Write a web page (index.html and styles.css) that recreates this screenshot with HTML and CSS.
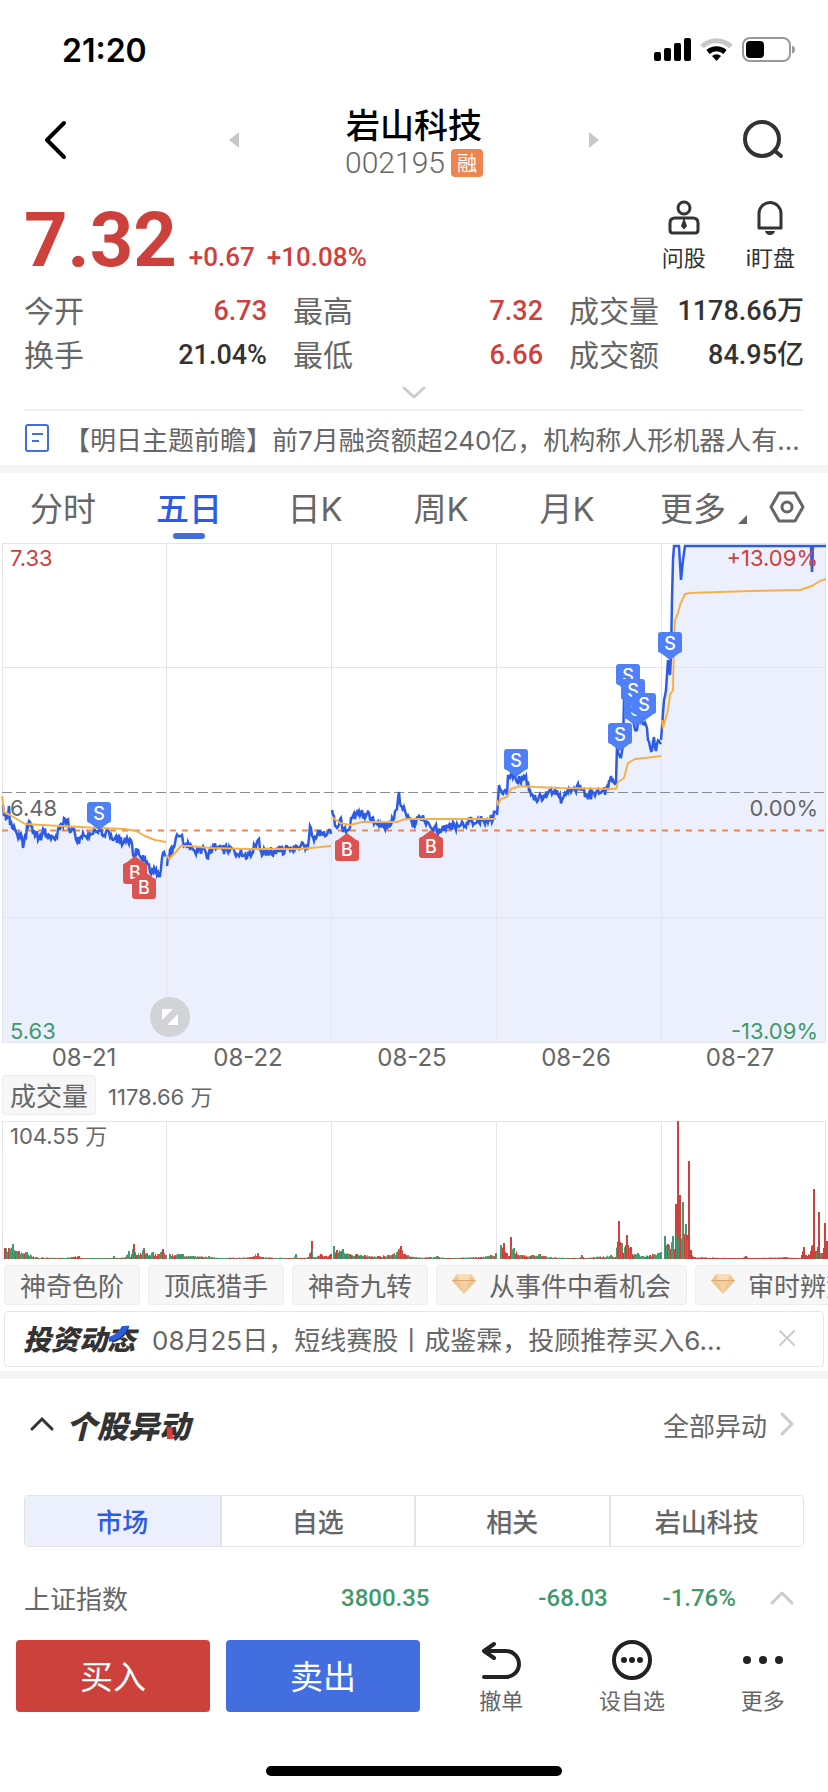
FILE: index.html
```html
<!DOCTYPE html>
<html lang="zh-CN">
<head>
<meta charset="utf-8">
<meta name="viewport" content="width=device-width">
<title>岩山科技 002195</title>
<link rel="stylesheet" href="styles.css">
</head>
<body>
<div class="status">
  <span class="clock">21:20</span>
  <svg class="status-icons" width="144" height="28" viewBox="0 0 144 28" aria-hidden="true">
    <rect x="3" y="16" width="7" height="9" rx="2"/><rect x="13" y="12" width="7" height="13" rx="2"/><rect x="23" y="7" width="7" height="18" rx="2"/><rect x="33" y="2" width="7" height="23" rx="2"/>
    <path d="M51 10.500a21 21 0 0 1 29 0" fill="none" stroke="#c8c8c8" stroke-width="5"/>
    <path d="M57 16a13 13 0 0 1 17 0" fill="none" stroke="#000" stroke-width="5"/>
    <path d="M65.500 25l-4.500-5a7 7 0 0 1 9 0z"/>
    <rect x="92" y="2" width="47" height="23" rx="7" fill="none" stroke="#999" stroke-width="2"/>
    <rect x="95" y="5" width="18" height="17" rx="4"/><path d="M141 9.500q3 1 3 4t-3 4z" fill="#999"/>
  </svg>
</div>

<header class="header">
  <button class="icon-btn" aria-label="返回"><svg width="24" height="40" viewBox="0 0 24 40"><path d="M21 3L4 20l17 17" fill="none" stroke="#000" stroke-width="4" stroke-linecap="round" stroke-linejoin="round"/></svg></button>
  <div class="stock">
    <button class="icon-btn" aria-label="上一只"><svg width="12" height="16" viewBox="0 0 12 16"><path d="M11 0v16L1 8z" fill="#c8c8c8"/></svg></button>
    <div class="stock-name">
      <h1>岩山科技</h1>
      <p><span>002195</span><span class="badge">融</span></p>
    </div>
    <button class="icon-btn" aria-label="下一只"><svg width="12" height="16" viewBox="0 0 12 16"><path d="M1 0v16l10-8z" fill="#c8c8c8"/></svg></button>
  </div>
  <button class="icon-btn search" aria-label="搜索"><svg width="42" height="40" viewBox="0 0 42 40"><circle cx="19" cy="19" r="17" fill="none" stroke="#333" stroke-width="4"/><path d="M32 31l6 5" fill="none" stroke="#333" stroke-width="4" stroke-linecap="round"/></svg></button>
</header>

<section class="quote">
  <div class="price-row">
    <strong class="price">7.32</strong>
    <span class="change">+0.67</span><span class="change">+10.08%</span>
    <div class="quick">
      <button class="quick-btn"><svg width="32" height="36" viewBox="0 0 32 36" fill="none" stroke="#333" stroke-width="3"><circle cx="16" cy="8" r="6"/><path d="M7 18h18q5 0 5 5v7q0 3-3 3H5q-3 0-3-3v-7q0-5 5-5z"/><path d="M16 19l-2.500 7 2.500 3 2.500-3z" fill="#333" stroke-width="1"/></svg>问股</button>
      <button class="quick-btn"><svg width="32" height="36" viewBox="0 0 32 36"><path d="M5 28V13.500a11 11 0 0 1 22 0V28z" fill="none" stroke="#333" stroke-width="3" stroke-linejoin="round"/><path d="M11 31h10q-1 4-5 4t-5-4z" fill="#333"/></svg>i盯盘</button>
    </div>
  </div>
  <dl class="stats">
    <div><dt>今开</dt><dd class="up">6.73</dd></div>
    <div><dt>最高</dt><dd class="up">7.32</dd></div>
    <div><dt>成交量</dt><dd>1178.66万</dd></div>
    <div><dt>换手</dt><dd>21.04%</dd></div>
    <div><dt>最低</dt><dd class="up">6.66</dd></div>
    <div><dt>成交额</dt><dd>84.95亿</dd></div>
  </dl>
  <button class="expand" aria-label="展开"><svg width="26" height="14" viewBox="0 0 26 14"><path d="M3 2l10 9 10-9" fill="none" stroke="#ccc" stroke-width="3" stroke-linecap="round" stroke-linejoin="round"/></svg></button>
  <a class="news" href="#"><svg width="26" height="30" viewBox="0 0 26 30" fill="none" stroke="#436ee0" stroke-width="2"><rect x="2" y="2" width="22" height="26" rx="2"/><path d="M8 11h11M8 18h7"/></svg><span>【明日主题前瞻】前7月融资额超240亿，机构称人形机器人有...</span></a>
</section>

<nav class="tabs">
  <button>分时</button><button class="active">五日</button><button>日K</button><button>周K</button><button>月K</button><button class="more">更多<svg width="10" height="10" viewBox="0 0 10 10"><path d="M9 0v9H0z" fill="#666"/></svg></button>
  <button class="gear" aria-label="设置"><svg width="36" height="34" viewBox="0 0 36 34" fill="none" stroke="#666" stroke-width="3"><path d="M10 3h16l8 14-8 14H10L2 17z" stroke-linejoin="round"/><circle cx="18" cy="17" r="5"/></svg></button>
</nav>

<section class="chart">
  <svg class="plot" viewBox="0 543 828 500" aria-label="五日走势">
    <g id="price-area"></g>
    <path class="grid" d="M2 543.500H826M2 667.500H826M2 917.500H826M2 1042.500H826M2.500 543V1042M166.500 543V1042M331.500 543V1042M496.500 543V1042M661.500 543V1042M825.500 543V1042"/>
    <path d="M2 792.500H826" stroke="#888c96" stroke-dasharray="10 4"/>
    <path d="M2 830.500H826" stroke="#ef8850" stroke-width="2" stroke-dasharray="6 6"/>
    <g id="price-lines"></g>
    <g id="markers"></g>
    <circle cx="170" cy="1017" r="20" fill="#d2d3d6"/>
    <path d="M162 1009h11l-11 11zM178 1014v11h-11z" fill="#fff"/>
  </svg>
  <span class="scale top left up">7.33</span><span class="scale top right up">+13.09%</span>
  <span class="scale mid left">6.48</span><span class="scale mid right">0.00%</span>
  <span class="scale bottom left down">5.63</span><span class="scale bottom right down">-13.09%</span>
</section>
<div class="dates"><span>08-21</span><span>08-22</span><span>08-25</span><span>08-26</span><span>08-27</span></div>

<div class="volume-head"><button class="volume-type">成交量</button><span>1178.66 万</span></div>
<section class="chart">
  <svg class="plot" viewBox="0 1121 828 139" aria-label="成交量">
    <path class="grid" d="M2 1121.500H826M2 1258.500H826M2.500 1121V1259M166.500 1121V1259M331.500 1121V1259M496.500 1121V1259M661.500 1121V1259M825.500 1121V1259"/>
    <g id="volume"></g>
  </svg>
  <span class="scale top left">104.55 万</span>
</section>

<div class="chips">
  <button>神奇色阶</button><button>顶底猎手</button><button>神奇九转</button>
  <button><svg width="24" height="22" viewBox="0 0 24 22"><path d="M5 1h14l5 7-12 13L0 8z" fill="#efc591"/><path d="M5 1h14l-2 6H7z" fill="#f8ddba"/><path d="M0 8h24l-1-1H1z" fill="#d9a870"/><path d="M7 8h10l-5 13z" fill="#f3cfa1"/></svg>从事件中看机会</button>
  <button><svg width="24" height="22" viewBox="0 0 24 22"><path d="M5 1h14l5 7-12 13L0 8z" fill="#efc591"/><path d="M5 1h14l-2 6H7z" fill="#f8ddba"/><path d="M0 8h24l-1-1H1z" fill="#d9a870"/><path d="M7 8h10l-5 13z" fill="#f3cfa1"/></svg>审时辨势</button>
</div>

<div class="tip">
  <b class="art">投资动态<svg class="slash" width="20" height="16" viewBox="0 0 20 16"><path d="M13 0h7q-5 13-20 16v-5q9-3 13-11z" fill="#2d5be3"/></svg></b>
  <span class="tip-text">08月25日，短线赛股丨成鉴霖，投顾推荐买入6...</span>
  <button class="icon-btn" aria-label="关闭"><svg width="18" height="18" viewBox="0 0 18 18"><path d="M2 2l14 14M16 2L2 16" stroke="#ccc" stroke-width="2" stroke-linecap="round"/></svg></button>
</div>

<section class="moves">
  <div class="moves-head">
    <button class="icon-btn" aria-label="收起"><svg width="26" height="16" viewBox="0 0 26 16"><path d="M3 13L13 3l10 10" fill="none" stroke="#333" stroke-width="3" stroke-linecap="round"/></svg></button>
    <h2 class="art">个股异动<svg class="tick" width="10" height="12" viewBox="0 0 10 12"><path d="M2 0h5l1 12H2z" fill="#e13a3a"/></svg></h2>
    <a href="#">全部异动<svg width="16" height="24" viewBox="0 0 16 24"><path d="M3 2l10 10L3 22" fill="none" stroke="#ccc" stroke-width="3" stroke-linecap="round" stroke-linejoin="round"/></svg></a>
  </div>
  <div class="segments"><button class="active">市场</button><button>自选</button><button>相关</button><button>岩山科技</button></div>
</section>

<div class="index">
  <span class="index-name">上证指数</span><span>3800.35</span><span>-68.03</span><span>-1.76%</span>
  <button class="icon-btn" aria-label="展开指数"><svg width="26" height="16" viewBox="0 0 26 16"><path d="M3 13L13 3l10 10" fill="none" stroke="#ccc" stroke-width="3" stroke-linecap="round" stroke-linejoin="round"/></svg></button>
</div>

<footer class="actions">
  <button class="trade buy">买入</button><button class="trade sell">卖出</button>
  <div class="tools">
    <button class="tool"><svg width="42" height="42" viewBox="0 0 42 42" fill="none" stroke="#222" stroke-width="4" stroke-linecap="round" stroke-linejoin="round"><path d="M14 4L4 11l10 7M4 11h22a13 13 0 0 1 0 26H4"/></svg>撤单</button>
    <button class="tool"><svg width="42" height="42" viewBox="0 0 42 42" fill="#222"><circle cx="21" cy="20" r="18" fill="none" stroke="#222" stroke-width="4"/><circle cx="13" cy="20" r="3"/><circle cx="21" cy="20" r="3"/><circle cx="29" cy="20" r="3"/></svg>设自选</button>
    <button class="tool"><svg width="42" height="42" viewBox="0 0 42 42" fill="#222"><circle cx="5" cy="20" r="4"/><circle cx="21" cy="20" r="4"/><circle cx="37" cy="20" r="4"/></svg>更多</button>
  </div>
</footer>
<div class="home"></div>
<script src="chart.js"></script>
</body>
</html>
```
FILE: styles.css
```css
* { box-sizing: border-box; }
body, h1, h2, p, dl, dd { margin: 0; }
body {
  background: #fff;
  color: #666;
  font-family: Inter, "Noto Sans CJK SC", sans-serif;
  font-size: 26px;
  overflow-x: hidden;
}
button {
  border: 0;
  padding: 0;
  background: none;
  color: inherit;
  font: inherit;
}
a { color: inherit; text-decoration: none; }
svg { display: block; flex: none; }
.up { color: #cd413d; }
.down { color: #3f9a6a; }

.status {
  display: flex;
  justify-content: space-between;
  align-items: center;
  height: 100px;
  padding: 0 33px 0 62px;
}
.clock { color: #000; font-size: 32px; font-weight: 600; }

.header {
  display: grid;
  grid-template-columns: 1fr auto 1fr;
  align-items: center;
  height: 80px;
  padding: 0 43px;
}
.header .icon-btn { justify-self: start; }
.header .search { justify-self: end; }
.stock {
  display: grid;
  grid-template-columns: 12px 1fr 12px;
  align-items: center;
  width: 45vw;
}
.stock-name { padding-top: 6px; text-align: center; }
.stock-name h1 {
  color: #000;
  font-size: 34px;
  font-weight: 500;
  line-height: 40px;
}
.stock-name p {
  display: flex;
  align-items: center;
  justify-content: center;
  gap: 6px;
  font: 30px/34px Roboto, sans-serif;
  font-weight: 300;
}
.badge {
  padding: 0 6px;
  border-radius: 4px;
  background: #ef844e;
  color: #fff;
  font: 20px/28px "Noto Sans CJK SC", sans-serif;
}

.quote { padding: 14px 24px 0; border-bottom: 8px solid #f4f4f4; }
.price-row { display: flex; align-items: baseline; gap: 12px; height: 92px; }
.price, .change {
  color: #cd413d;
  font-family: Roboto, sans-serif;
  font-weight: 500;
}
.price { font-size: 76px; line-height: 92px; font-weight: 700; }
.change { font-size: 26px; }
.quick { display: flex; gap: 40px; margin-left: auto; align-self: flex-start; }
.quick-btn {
  display: flex;
  flex-direction: column;
  align-items: center;
  gap: 6px;
  padding-top: 6px;
  color: #333;
  font-size: 22px;
  line-height: 32px;
  white-space: nowrap;
}
.quick-btn:last-child { margin-right: 9px; }

.stats {
  display: grid;
  grid-template-columns: 243fr 250fr 235fr;
  column-gap: 26px;
  padding-top: 3px;
}
.stats div { display: flex; justify-content: space-between; line-height: 44px; white-space: nowrap; }
.stats dt { font-size: 30px; }
.stats dd {
  color: #333;
  font-family: Roboto, "Noto Sans CJK SC", sans-serif;
  font-size: 27px;
  font-weight: 500;
}
.stats dd.up { color: #cd413d; }
.expand { display: block; margin: 9px auto; }
.news {
  display: flex;
  align-items: center;
  gap: 14px;
  height: 56px;
  border-top: 2px solid #f0f0f0;
  white-space: nowrap;
}

.tabs {
  display: grid;
  grid-template-columns: repeat(6, 126fr) 72fr;
  height: 70px;
  font-size: 33px;
}
.tabs button { position: relative; padding-bottom: 2px; white-space: nowrap; }
.tabs .active { color: #2d5be3; font-weight: 500; }
.tabs .active::after {
  content: "";
  position: absolute;
  left: 50%;
  bottom: 4px;
  width: 32px;
  height: 6px;
  margin-left: -16px;
  border-radius: 3px;
  background: #436ee0;
}
.tabs .more svg { position: absolute; right: 8px; bottom: 18px; }
.tabs .gear { display: flex; align-items: center; justify-content: center; padding-right: 10px; }

.chart { position: relative; }
.plot { width: 100%; height: auto; }
.grid { fill: none; stroke: #e4e5ea; }
.scale { position: absolute; font-size: 22px; line-height: 28px; }
.left { left: 10px; }
.right { right: 10px; }
.top { top: 1px; }
.mid { top: 50%; padding-top: 1px; }
.bottom { bottom: -2px; }
.marker-text { fill: #fff; font: 500 18px Inter, sans-serif; text-anchor: middle; }

.dates {
  display: grid;
  grid-template-columns: repeat(5, 1fr);
  padding: 0 6px 2px 2px;
  font-size: 24px;
  line-height: 30px;
  text-align: center;
}
.volume-head {
  display: flex;
  align-items: center;
  gap: 12px;
  height: 46px;
  padding: 0 2px 6px;
  font-size: 22px;
}
.volume-type {
  height: 40px;
  padding: 0 7px 2px;
  border: 1px solid #ececec;
  border-radius: 4px;
  background: #f7f7f7;
  font-size: 26px;
}

.chips { display: flex; gap: 8px; padding: 5px 0 6px 4px; overflow: hidden; }
.chips button {
  display: flex;
  align-items: center;
  flex: none;
  gap: 13px;
  height: 40px;
  padding: 0 15px 2px;
  border: 1px solid #ececec;
  border-radius: 4px;
  background: #f7f7f7;
}
.tip {
  display: flex;
  align-items: center;
  height: 56px;
  margin: 0 4px 4px;
  padding: 0 27px 2px 18px;
  border: 1px solid #e6e6e6;
  border-radius: 4px;
}
.art {
  position: relative;
  color: #333;
  font-size: 28px;
  font-style: italic;
  font-weight: 900;
  white-space: nowrap;
}
.slash { position: absolute; right: 6px; top: 8px; }
.tip-text { flex: 1; margin-left: 17px; white-space: nowrap; overflow: hidden; }

.moves { padding: 0 24px; border-top: 8px solid #f4f4f4; }
.moves-head { display: flex; align-items: center; height: 90px; }
.moves-head .icon-btn { padding-left: 5px; }
.moves-head .art { margin-left: 11px; font-size: 31px; }
.tick { position: absolute; right: 15px; bottom: 8px; }
.moves-head a { display: flex; align-items: center; gap: 12px; margin-left: auto; padding-right: 9px; }
.segments {
  display: grid;
  grid-template-columns: repeat(4, 1fr);
  height: 52px;
  margin-top: 26px;
  border: 1px solid #e4e4e4;
  border-radius: 4px;
  font-weight: 500;
}
.segments button { padding-bottom: 2px; }
.segments button + button { border-left: 2px solid #e4e4e4; }
.segments .active { background: #ecf0fc; color: #2d5be3; }

.index {
  display: grid;
  grid-template-columns: 200fr 205fr 178fr 128fr 59fr;
  align-items: center;
  height: 93px;
  padding: 8px 33px 0 24px;
  color: #3f9a6a;
  font-family: Roboto, sans-serif;
  font-size: 24px;
  font-weight: 500;
  text-align: right;
}
.index-name { color: #666; font: 26px "Noto Sans CJK SC", sans-serif; text-align: left; }
.index .icon-btn { justify-self: end; }

.actions {
  display: grid;
  grid-template-columns: 194fr 194fr 392fr;
  column-gap: 16px;
  padding-left: 16px;
}
.trade { height: 72px; padding-bottom: 2px; border-radius: 4px; color: #fff; font-size: 33px; }
.buy { background: #cd413d; }
.sell { background: #436ee0; }
.tools { display: grid; grid-template-columns: repeat(3, 1fr); }
.tool {
  display: flex;
  flex-direction: column;
  align-items: center;
  gap: 4px;
  font-size: 22px;
  line-height: 30px;
}
.home { width: 296px; height: 10px; margin: 50px auto 16px; border-radius: 5px; background: #000; }
```
FILE: chart.js
```js
// Five sessions of prices: x and y pairs in plot units
const price = [
  [2,805,4,816,8,815,9,806,10,825,14,826,17,834,21,834,23,848,25,836,30,822,33,834,36,835,39,838,44,832,50,836,56,836,62,824,67,820,70,832,75,834,77,842,85,836,92,834,99,830,106,832,110,837,118,838,124,842,132,844,134,857,138,849,141,858,147,862,151,874,154,868,157,875,160,876,162,858,166,855],
  [167,866,170,850,172,855,174,847,178,836,182,835,184,846,188,842,190,850,205,850,207,858,214,847,222,849,230,850,240,853,247,858,255,846,258,840,261,851,270,852,285,850,295,849,303,843,308,846,310,826,312,836,320,836,331,834],
  [332,810,337,828,341,818,343,832,348,830,352,818,358,814,361,813,366,816,372,818,378,822,388,826,392,818,396,810,399,792,401,806,405,811,412,823,420,817,424,820,432,829,442,829,447,826,458,826,470,822,478,819,484,822,490,820,496,813],
  [497,815,499,785,503,794,507,795,508,775,511,774,516,780,525,778,530,790,536,800,540,794,545,798,550,790,558,795,562,800,568,793,575,790,580,785,587,795,600,793,608,790,611,776,614,783,616,783,617,745,620,757,623,745,624,700,628,690,635,730,640,722,646,725,648,740,651,751,654,737,656,751,659,741,661,744],
  [661,740,664,700,666,690,668,660,670,675,671,655,672,600,673,560,674,546,679,546,681,580,683,560,685,546,811,546,812,572,813,546,826,546]
];
const average = [
  [2,796,4,812,10,815,25,824,60,826,100,828,125,829,136,831,145,836,155,840,166,842],
  [167,855,169,859,175,853,181,846,190,846,210,848,250,849,300,849,331,846],
  [332,817,340,823,350,825,362,822,380,822,397,822,405,819,496,819],
  [497,800,498,805,501,799,507,797,511,789,520,786,535,787,560,788,616,789,618,782,624,778,628,763,635,759,645,758,661,756],
  [662,720,663,728,668,710,670,695,673,690,674,640,675,620,678,613,680,605,685,594,690,593,750,591,800,590,812,586,820,581,826,579]
];
const volume = [
  [4,11,8,11,12,15,15,8,18,8,26,7,35,2,60,1,78,3,82,1,111,1,113,3,116,1,125,2,128,8,130,2,133,15,136,4,143,11,146,6,152,7,158,5,162,10,165,4],
  [169,5,178,5,182,5,192,3,208,3,220,1,250,2,257,6,262,2,293,1,295,5,298,1,308,2,311,18,313,2,320,5,325,3,330,5],
  [333,13,336,9,342,10,348,5,356,5,364,4,378,3,396,7,400,13,404,5,415,2,430,2,436,3,445,1,475,2,480,2,490,4,495,6],
  [500,14,503,16,506,6,509,3,510,22,513,11,520,4,532,4,539,5,550,2,578,1,581,4,584,1,610,4,615,2,618,38,621,16,623,6,626,24,630,12,634,5,637,6,642,3,652,5,660,7],
  [664,23,667,15,672,23,674,10,675,55,677,138,679,64,680,18,682,57,685,35,686,24,688,98,690,9,694,2,742,1,745,3,748,1,784,2,800,1,803,12,805,4,810,8,813,70,815,8,817,12,818,47,820,6,822,6,824,36,826,18]
];
const ns = "http://www.w3.org/2000/svg";
function draw(parent, tag, attrs, text) {
  const node = document.createElementNS(ns, tag);
  for (const key in attrs) node.setAttribute(key, attrs[key]);
  if (text) node.textContent = text;
  document.getElementById(parent).appendChild(node);
}
let seed = 17;
function random() {
  seed = (seed * 16807) % 2147483647;
  return seed / 2147483647;
}
function sample(list, x) {
  let i = 0;
  while (i < list.length - 4 && list[i + 2] < x) i += 2;
  const t = Math.max(0, Math.min(1, (x - list[i]) / (list[i + 2] - list[i])));
  return list[i + 1] + (list[i + 3] - list[i + 1]) * t;
}
function path(list) {
  return "M" + list.map((p) => p[0] + " " + p[1].toFixed(1)).join("L");
}
price.forEach((day, d) => {
  const points = [];
  for (let i = 0; i < day.length - 2; i += 2) {
    points.push([day[i], day[i + 1]]);
    for (let x = day[i] + 1; x < day[i + 2]; x++) {
      const wobble = day[i + 1] < 650 || Math.abs(day[i + 3] - day[i + 1]) > 25 ? 0 : 10;
      points.push([x, sample(day, x) + (random() - 0.5) * wobble]);
    }
  }
  points.push(day.slice(-2));
  draw("price-area", "path", { d: path(points) + "V1042H" + points[0][0] + "Z", fill: "#ecf0fc" });
  draw("price-lines", "path", { d: path(points), fill: "none", stroke: "#2d5be3", "stroke-width": 2.5 });
  const avg = [];
  for (let i = 0; i < average[d].length; i += 2) avg.push(average[d].slice(i, i + 2));
  draw("price-lines", "path", { d: path(avg), fill: "none", stroke: "#f5b04a", "stroke-width": 2, "stroke-linejoin": "round" });
});

// Trades: side, box left, box top
[["S",87,802],["S",504,749],["S",616,664],["S",624,698],["S",621,679],["S",632,693],["S",608,723],["S",658,632],
 ["B",123,863],["B",132,878],["B",335,840],["B",419,837]].forEach(([side, x, y]) => {
  const sell = side === "S";
  draw("markers", "rect", { x, y, width: 24, height: 21, rx: 3, fill: sell ? "#5080f7" : "#dc5452" });
  draw("markers", "path", {
    d: sell ? `M${x} ${y + 19}h24l-12 9z` : `M${x} ${y + 2}h24l-12-9z`,
    fill: sell ? "#5080f7" : "#dc5452"
  });
  draw("markers", "text", { x: x + 12, y: sell ? y + 18 : y + 16, class: "marker-text" }, side);
});

volume.forEach((day) => {
  for (let x = day[0]; x <= day[day.length - 2]; x++) {
    const known = day.findIndex((v, i) => i % 2 === 0 && v === x);
    const height = known >= 0 ? day[known + 1] : Math.min(sample(day, x), 26) * (0.5 + random() * 0.5);
    let red = random() > 0.6;
    if (known >= 0 && height > 16) red = ![23, 57, 35].includes(height);
    if (x > 688 && x < 812) red = true;
    draw("volume", "rect", { x, y: 1259 - Math.max(height, 1), width: known >= 0 ? 2 : 1, height: Math.max(height, 1), fill: red ? "#cd413d" : "#489a6e" });
  }
});
```
